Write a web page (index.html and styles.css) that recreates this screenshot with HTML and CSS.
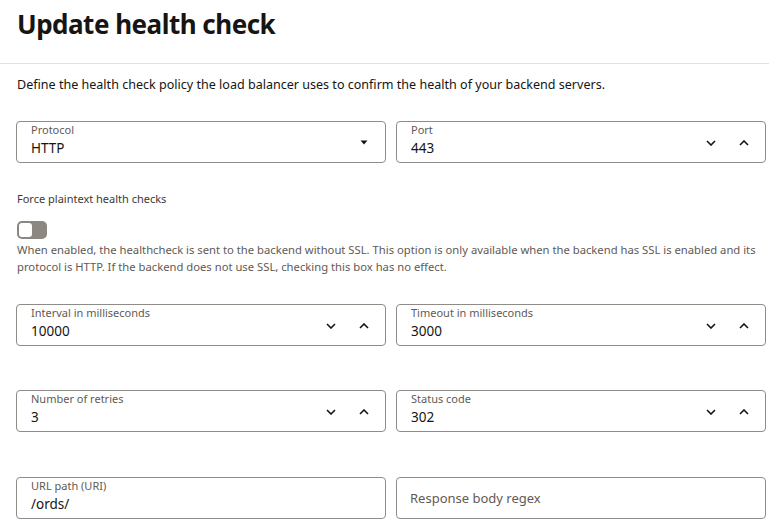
FILE: index.html
```html
<!DOCTYPE html>
<html lang="en">
<head>
<meta charset="utf-8">
<title>Update health check</title>
<link rel="stylesheet" href="styles.css">
</head>
<body>
<header class="header">
  <h1 class="title">Update health check</h1>
</header>
<main class="content">
  <p class="intro">Define the health check policy the load balancer uses to confirm the health of your backend servers.</p>

  <div class="row row-first">
    <div class="field">
      <div class="field-text">
        <span class="label">Protocol</span>
        <span class="value">HTTP</span>
      </div>
      <span class="caret"><svg width="8" height="5" viewBox="0 0 8 5"><path d="M0.5 0.5 H7.5 L4 4.5 Z" fill="#161513"/></svg></span>
    </div>
    <div class="field">
      <div class="field-text">
        <span class="label">Port</span>
        <span class="value">443</span>
      </div>
      <span class="spin"><svg width="10" height="6" viewBox="0 0 10 6"><path d="M1 1 L5 5 L9 1" fill="none" stroke="#161513" stroke-width="1.6"/></svg></span>
      <span class="spin"><svg width="10" height="6" viewBox="0 0 10 6"><path d="M1 5 L5 1 L9 5" fill="none" stroke="#161513" stroke-width="1.6"/></svg></span>
    </div>
  </div>

  <div class="switch-group">
    <div class="switch-label">Force plaintext health checks</div>
    <div class="switch"><span class="knob"></span></div>
    <p class="help">When enabled, the healthcheck is sent to the backend without SSL. This option is only available when the backend has SSL is enabled and its protocol is HTTP. If the backend does not use SSL, checking this box has no effect.</p>
  </div>

  <div class="row row-second">
    <div class="field">
      <div class="field-text">
        <span class="label">Interval in milliseconds</span>
        <span class="value">10000</span>
      </div>
      <span class="spin"><svg width="10" height="6" viewBox="0 0 10 6"><path d="M1 1 L5 5 L9 1" fill="none" stroke="#161513" stroke-width="1.6"/></svg></span>
      <span class="spin"><svg width="10" height="6" viewBox="0 0 10 6"><path d="M1 5 L5 1 L9 5" fill="none" stroke="#161513" stroke-width="1.6"/></svg></span>
    </div>
    <div class="field">
      <div class="field-text">
        <span class="label">Timeout in milliseconds</span>
        <span class="value">3000</span>
      </div>
      <span class="spin"><svg width="10" height="6" viewBox="0 0 10 6"><path d="M1 1 L5 5 L9 1" fill="none" stroke="#161513" stroke-width="1.6"/></svg></span>
      <span class="spin"><svg width="10" height="6" viewBox="0 0 10 6"><path d="M1 5 L5 1 L9 5" fill="none" stroke="#161513" stroke-width="1.6"/></svg></span>
    </div>
  </div>

  <div class="row row-next">
    <div class="field">
      <div class="field-text">
        <span class="label">Number of retries</span>
        <span class="value">3</span>
      </div>
      <span class="spin"><svg width="10" height="6" viewBox="0 0 10 6"><path d="M1 1 L5 5 L9 1" fill="none" stroke="#161513" stroke-width="1.6"/></svg></span>
      <span class="spin"><svg width="10" height="6" viewBox="0 0 10 6"><path d="M1 5 L5 1 L9 5" fill="none" stroke="#161513" stroke-width="1.6"/></svg></span>
    </div>
    <div class="field">
      <div class="field-text">
        <span class="label">Status code</span>
        <span class="value">302</span>
      </div>
      <span class="spin"><svg width="10" height="6" viewBox="0 0 10 6"><path d="M1 1 L5 5 L9 1" fill="none" stroke="#161513" stroke-width="1.6"/></svg></span>
      <span class="spin"><svg width="10" height="6" viewBox="0 0 10 6"><path d="M1 5 L5 1 L9 5" fill="none" stroke="#161513" stroke-width="1.6"/></svg></span>
    </div>
  </div>

  <div class="row row-last">
    <div class="field">
      <div class="field-text">
        <span class="label">URL path (URI)</span>
        <span class="value">/ords/</span>
      </div>
    </div>
    <div class="field field-empty">
      <span class="placeholder">Response body regex</span>
    </div>
  </div>
</main>
</body>
</html>
```

FILE: styles.css
```css
* { box-sizing: border-box; }

html, body {
  margin: 0;
  padding: 0;
  background: #ffffff;
  color: #161513;
  font-family: "Noto Sans", "Open Sans", sans-serif;
}

.header {
  height: 64px;
  border-bottom: 1px solid #e4e2df;
  padding: 6px 16px 0 17px;
}

.title {
  margin: 0;
  font-size: 26px;
  line-height: 36px;
  font-weight: 700;
  letter-spacing: -0.5px;
  color: #161513;
}

.content {
  padding: 0 3px 0 16px;
}

.intro {
  margin: 12px 0 0 1px;
  font-size: 12.55px;
  line-height: 18px;
  color: #161513;
}

.row {
  display: grid;
  grid-template-columns: 370px 370px;
  column-gap: 10px;
}

.row-first { margin-top: 27px; }
.row-second { margin-top: 29px; }
.row-next { margin-top: 44px; }
.row-last { margin-top: 45px; }

.field {
  height: 42px;
  border: 1px solid #8f8b87;
  border-radius: 4px;
  display: flex;
  align-items: center;
  padding: 0 5px 0 14px;
}

.field-text {
  flex: 1;
  display: flex;
  flex-direction: column;
  align-self: flex-start;
  padding-top: 0;
}

.label {
  font-size: 11px;
  line-height: 15px;
  color: #5f5a55;
}

.value {
  font-size: 13.5px;
  line-height: 19px;
  margin-top: 1.5px;
  color: #161513;
}

.caret {
  width: 16px;
  display: flex;
  justify-content: center;
  margin-right: 8px;
}

.spin {
  width: 33px;
  display: flex;
  justify-content: center;
  padding-top: 1px;
}

.field-empty { padding-left: 13px; }

.placeholder {
  font-size: 13px;
  color: #5f5a55;
}

.switch-group {
  margin-top: 28px;
  padding-left: 1px;
}

.switch-label {
  font-size: 11px;
  line-height: 16px;
  color: #3d3935;
}

.switch {
  margin-top: 14px;
  width: 30px;
  height: 18px;
  border-radius: 5px;
  background: #8d8781;
  padding: 2px;
}

.knob {
  display: block;
  width: 13px;
  height: 14px;
  border-radius: 3px;
  background: #ffffff;
}

.help {
  margin: 2px 0 0;
  font-size: 11.25px;
  line-height: 17px;
  color: #5f5a55;
}
```
